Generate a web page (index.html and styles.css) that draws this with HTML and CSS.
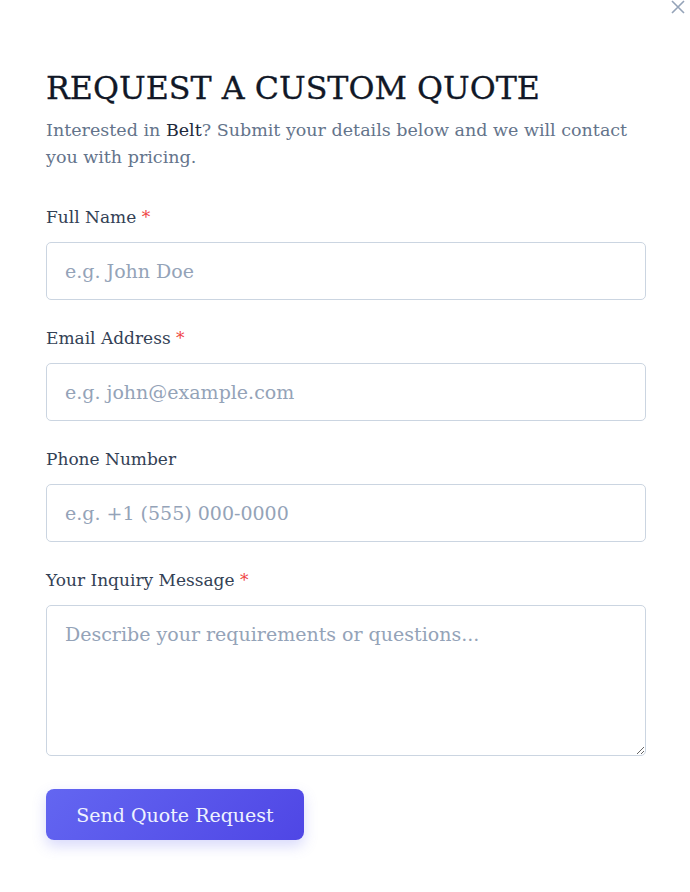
FILE: index.html
```html
<!DOCTYPE html>
<html>
<head>
<meta charset="utf-8">
<link rel="stylesheet" href="styles.css">
</head>
<body>
<div class="modal">
  <button class="close" aria-label="Close">
    <svg width="16" height="16" viewBox="0 0 16 16"><path d="M2 2 L14 14 M14 2 L2 14" stroke="#94a3b8" stroke-width="1.6" fill="none"/></svg>
  </button>
  <h1 class="title">REQUEST A CUSTOM QUOTE</h1>
  <p class="sub">Interested in <strong>Belt</strong>? Submit your details below and we will contact you with pricing.</p>
  <form class="form">
    <div class="field">
      <label class="label">Full Name <span class="req">*</span></label>
      <input class="input" type="text" placeholder="e.g. John Doe">
    </div>
    <div class="field">
      <label class="label">Email Address <span class="req">*</span></label>
      <input class="input" type="text" placeholder="e.g. john@example.com">
    </div>
    <div class="field">
      <label class="label">Phone Number</label>
      <input class="input" type="text" placeholder="e.g. +1 (555) 000-0000">
    </div>
    <div class="field">
      <label class="label">Your Inquiry Message <span class="req">*</span></label>
      <textarea class="input area" placeholder="Describe your requirements or questions..."></textarea>
    </div>
    <button class="submit" type="button">Send Quote Request</button>
  </form>
</div>
</body>
</html>
```
FILE: styles.css
```css
html, body { margin: 0; padding: 0; background: #fff; }
body { font-family: "DejaVu Serif", serif; color: #1e293b; }
.modal { position: relative; padding: 66px 44px 40px 46px; }
.close { position: absolute; top: -1px; right: 4px; background: none; border: 0; padding: 0; width: 16px; height: 16px; }
.title { font-family: "DejaVu Serif", serif; font-weight: 400; font-size: 31.7px; margin: 0; line-height: 44px; color: #111827; -webkit-text-stroke: 0.3px #111827; }
.sub { margin: 7px 0 0; font-size: 17.5px; line-height: 27px; color: #64748b; max-width: 600px; }
.sub strong { font-weight: 400; color: #1e293b; }
.form { margin-top: 34px; display: flex; flex-direction: column; gap: 26px; }
.field { display: flex; flex-direction: column; gap: 13px; }
.label { font-size: 17px; line-height: 24px; color: #334155; }
.req { color: #ef4444; }
.input { box-sizing: border-box; width: 600px; height: 58px; border: 1px solid #cbd5e1; border-radius: 5px; padding: 0 18px; font-family: "DejaVu Serif", serif; font-size: 19px; color: #1e293b; outline: none; }
.input::placeholder { color: #94a3b8; }
.area { height: 151px; padding: 15px 18px; resize: vertical; line-height: 26px; }
.submit { margin-top: 7px; align-self: flex-start; width: 258px; height: 51px; border: 0; border-radius: 8px; background: linear-gradient(135deg, #6366f1, #4f46e5); color: #eef2ff; font-family: "DejaVu Serif", serif; font-size: 19px; box-shadow: 0 6px 14px rgba(99,102,241,0.25); }
```
